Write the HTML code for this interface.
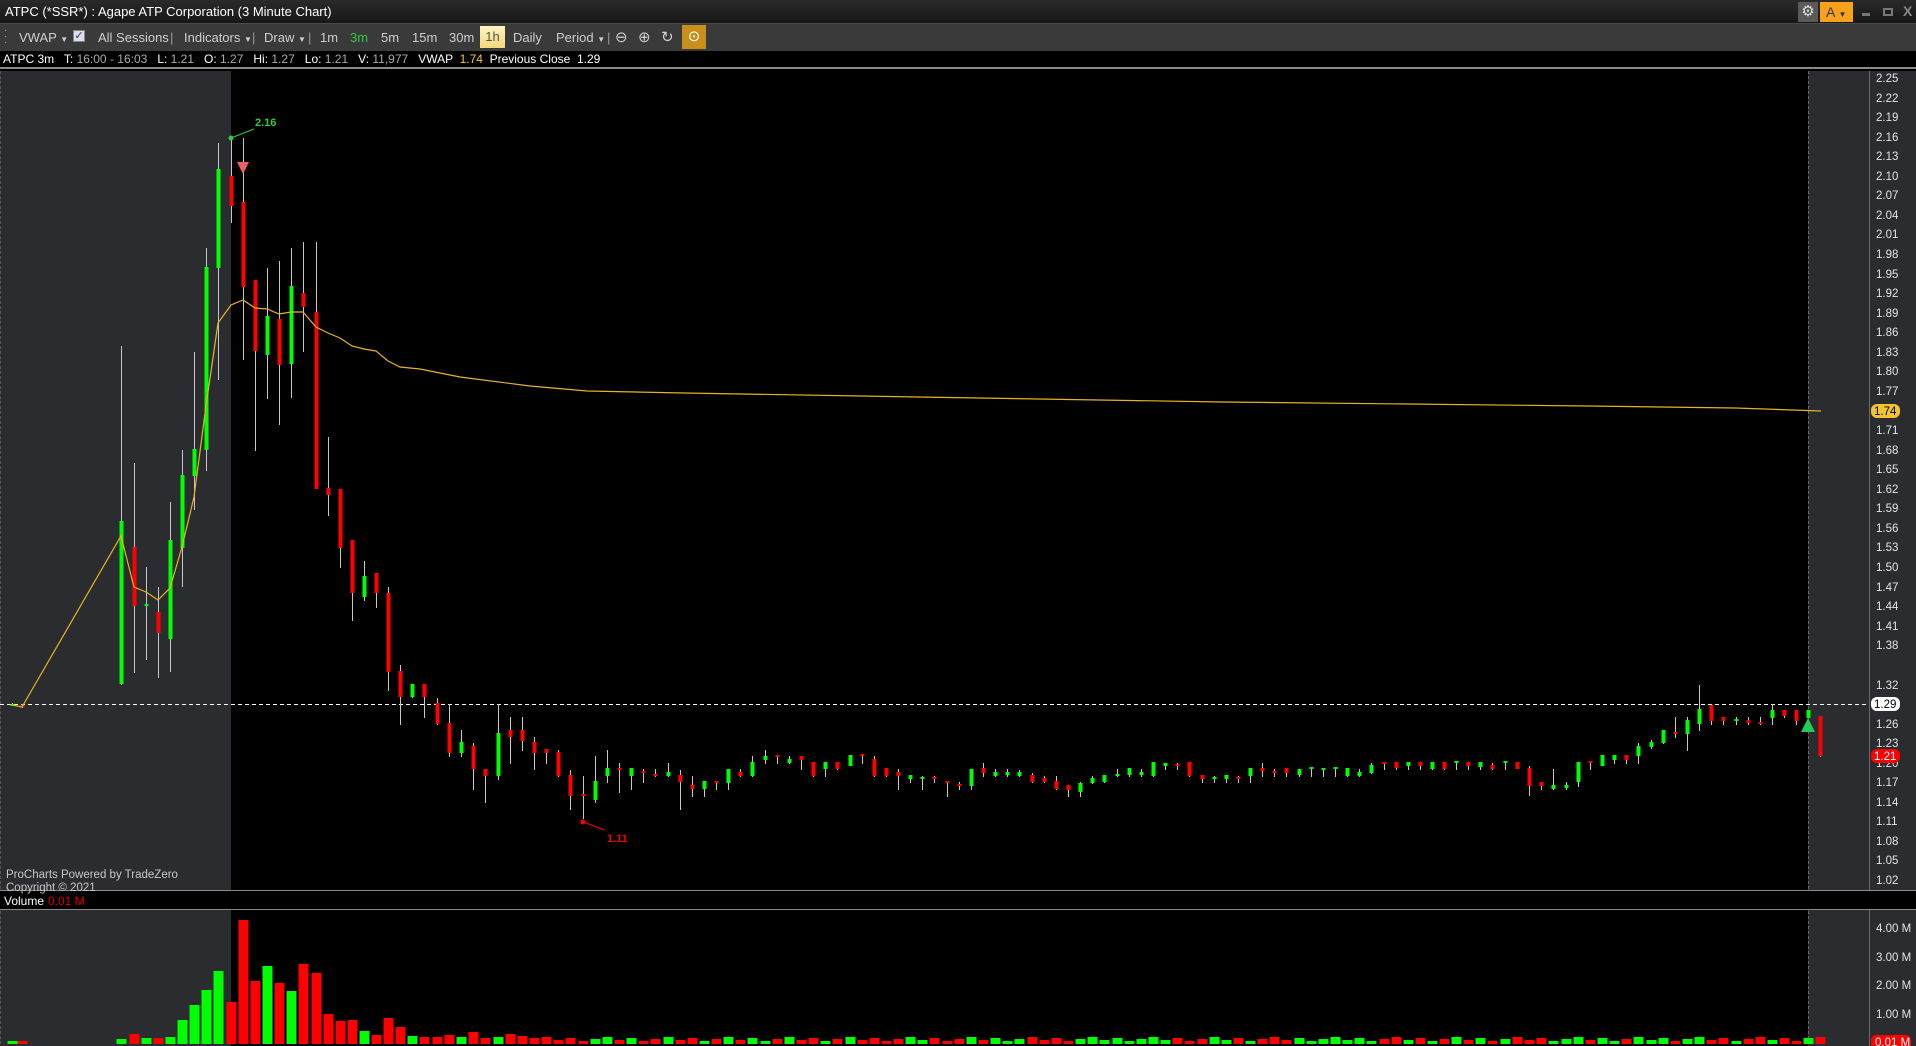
<!DOCTYPE html>
<html><head><meta charset="utf-8">
<style>
*{margin:0;padding:0;box-sizing:border-box}
body{width:1916px;height:1046px;background:#000;overflow:hidden;position:relative;font-family:"Liberation Sans",Arial,sans-serif}
#title{position:absolute;left:0;top:0;width:1916px;height:23px;background:linear-gradient(#2a2a2a,#171717);color:#fff;font-size:13px;line-height:23px;padding-left:5px;z-index:3}
#tb{position:absolute;left:0;top:23px;width:1916px;height:28px;background:#3a3a3a;border-top:1px solid #4a4a4a;z-index:3;color:#cfcfcf;font-size:13px}
#tb span{position:absolute;top:6px}
#info{position:absolute;left:0;top:51px;width:1916px;height:18px;background:#000;border-bottom:2px solid #8a8a8a;color:#fff;font-size:12px;line-height:17px;padding-left:3px;z-index:3;white-space:pre}
.g{color:#aaa}
svg{position:absolute;left:0;top:0}
</style></head><body>
<div id="title">ATPC (*SSR*) : Agape ATP Corporation (3 Minute Chart)
 <div style="position:absolute;left:1798px;top:2px;width:20px;height:20px;background:#5a5a5a;color:#ddd;font-size:15px;line-height:20px;text-align:center">⚙</div>
 <div style="position:absolute;left:1820px;top:2px;width:33px;height:20px;background:#f7a21a;color:#333;font-size:14px;line-height:20px;padding-left:6px">A <span style="font-size:8px">▼</span></div>
 <div style="position:absolute;left:1862px;top:13px;width:8px;height:3px;background:#777"></div>
 <div style="position:absolute;left:1883px;top:8px;width:10px;height:8px;border:2px solid #777"></div>
 <div style="position:absolute;left:1903px;top:0;color:#888;font-size:14px;font-weight:bold">X</div>
</div>
<div id="tb">
 <span style="left:4px;top:4px;color:#aaa;font-size:10px;line-height:6px">·<br>·<br>·</span>
 <span style="left:19px">VWAP <small style="font-size:8px">▼</small></span>
 <span style="left:73px;top:6px;width:12px;height:12px;background:#dde;border:1px solid #888;color:#246;font-size:11px;line-height:11px;text-align:center">✓</span>
 <span style="left:98px">All Sessions</span>
 <span style="left:170px;color:#999">|</span>
 <span style="left:184px">Indicators <small style="font-size:8px">▼</small></span>
 <span style="left:252px;color:#999">|</span>
 <span style="left:264px">Draw <small style="font-size:8px">▼</small></span>
 <span style="left:308px;color:#999">|</span>
 <span style="left:320px">1m</span>
 <span style="left:350px;color:#2ecc40">3m</span>
 <span style="left:381px">5m</span>
 <span style="left:412px">15m</span>
 <span style="left:449px">30m</span>
 <span style="left:480px;top:2px;width:25px;height:22px;background:linear-gradient(#fff6c0,#f5d77a);color:#555;text-align:center;line-height:22px">1h</span>
 <span style="left:513px">Daily</span>
 <span style="left:556px">Period <small style="font-size:8px">▼</small></span>
 <span style="left:607px;color:#999">|</span>
 <span style="left:615px;font-size:15px;top:4px">⊖</span>
 <span style="left:638px;font-size:15px;top:4px">⊕</span>
 <span style="left:661px;font-size:15px;top:4px">↻</span>
 <span style="left:682px;top:1px;width:24px;height:24px;background:#c8901a;color:#fff;text-align:center;line-height:24px;font-size:15px">⊙</span>
</div>
<div id="info">ATPC 3m   T: <span class="g">16:00 - 16:03</span>   L: <span class="g">1.21</span>   O: <span class="g">1.27</span>   Hi: <span class="g">1.27</span>   Lo: <span class="g">1.21</span>   V: <span class="g">11,977</span>   VWAP  <span style="color:#f4c430">1.74</span>  Previous Close  1.29</div>

<svg id="ch" width="1916" height="1046" xmlns="http://www.w3.org/2000/svg" font-family="Liberation Sans, Arial, sans-serif">
<rect x="0" y="69" width="1916" height="977" fill="#000"/>
<rect x="0" y="71" width="231" height="819" fill="#2b2c30"/>
<rect x="0" y="910" width="231" height="136" fill="#2b2c30"/>
<rect x="1808" y="71" width="61" height="819" fill="#2b2c30"/>
<rect x="1808" y="910" width="61" height="136" fill="#2b2c30"/>
<rect x="1869" y="71" width="47" height="975" fill="#2b2c30"/>
<line x1="1869.5" y1="71" x2="1869.5" y2="1046" stroke="#6a6a6a"/>
<line x1="1808.5" y1="71" x2="1808.5" y2="1046" stroke="#666" stroke-dasharray="3,2"/>
<line x1="0.5" y1="71" x2="0.5" y2="1046" stroke="#555" stroke-dasharray="3,2"/>
<rect x="0" y="891" width="1916" height="18" fill="#000"/>
<line x1="0" y1="890.5" x2="1916" y2="890.5" stroke="#8a8a8a"/>
<line x1="0" y1="909.5" x2="1916" y2="909.5" stroke="#8a8a8a"/>
<text x="4" y="905" font-size="12" fill="#fff">Volume</text>
<text x="48" y="905" font-size="12" fill="#e00000">0.01 M</text>
<text x="6" y="878" font-size="11.5" fill="#c8c8c8">ProCharts Powered by TradeZero</text>
<text x="6" y="891" font-size="11.5" fill="#c8c8c8">Copyright © 2021</text>
<line x1="0" y1="704.5" x2="1869" y2="704.5" stroke="#fff" stroke-dasharray="4,3"/>
<g id="cd"></g>
<polyline fill="none" stroke="#e6b422" stroke-width="1.2" points="12,705 22,707 121,536 134,587 146,592 158,600 170,588 182,547 194,497 206,406 218,323 231,305 243,300 255,308 267,309 279,314 291,312 303,312 316,327 328,333 340,338 352,346 364,349 376,351 388,361 400,367 420,369 460,377 530,386 587,391 684,393 978,398 1222,402 1589,406 1735,408 1821,411"/>
<g font-size="11.5" fill="#e4e4e4">
<text x="1876" y="82">2.25</text><text x="1876" y="102">2.22</text><text x="1876" y="121">2.19</text><text x="1876" y="141">2.16</text><text x="1876" y="160">2.13</text><text x="1876" y="180">2.10</text><text x="1876" y="199">2.07</text><text x="1876" y="219">2.04</text><text x="1876" y="238">2.01</text><text x="1876" y="258">1.98</text><text x="1876" y="278">1.95</text><text x="1876" y="297">1.92</text><text x="1876" y="317">1.89</text><text x="1876" y="336">1.86</text><text x="1876" y="356">1.83</text><text x="1876" y="375">1.80</text><text x="1876" y="395">1.77</text><text x="1876" y="434">1.71</text><text x="1876" y="454">1.68</text><text x="1876" y="473">1.65</text><text x="1876" y="493">1.62</text><text x="1876" y="512">1.59</text><text x="1876" y="532">1.56</text><text x="1876" y="551">1.53</text><text x="1876" y="571">1.50</text><text x="1876" y="591">1.47</text><text x="1876" y="610">1.44</text><text x="1876" y="630">1.41</text><text x="1876" y="649">1.38</text><text x="1876" y="689">1.32</text><text x="1876" y="728">1.26</text><text x="1876" y="747">1.23</text><text x="1876" y="767">1.20</text><text x="1876" y="786">1.17</text><text x="1876" y="806">1.14</text><text x="1876" y="825">1.11</text><text x="1876" y="845">1.08</text><text x="1876" y="864">1.05</text><text x="1876" y="884">1.02</text>
<text x="1876" y="932">4.00 M</text><text x="1876" y="961">3.00 M</text><text x="1876" y="989">2.00 M</text><text x="1876" y="1018">1.00 M</text>
</g>
<rect x="1871" y="404" width="29" height="14" rx="6" fill="#f4c430"/>
<text x="1874" y="415" font-size="11.5" fill="#000">1.74</text>
<rect x="1871" y="697" width="29" height="14" rx="6" fill="#fff"/>
<text x="1874" y="708" font-size="11.5" fill="#000">1.29</text>
<rect x="1871" y="749" width="29" height="14" rx="6" fill="#f00"/>
<text x="1874" y="760" font-size="11.5" fill="#fff">1.21</text>
<rect x="1871" y="1035" width="40" height="14" rx="5" fill="#f00"/>
<text x="1875" y="1046" font-size="11.5" fill="#fff">0.01 M</text>
<circle cx="231" cy="138" r="2.5" fill="#2ecc40"/>
<line x1="231" y1="138" x2="254" y2="129" stroke="#2ecc40"/>
<text x="255" y="126" font-size="11" font-weight="bold" fill="#2ecc40">2.16</text>
<polygon points="237,162 249,162 243,174" fill="#f06060"/>
<circle cx="583" cy="822" r="2.5" fill="#f00"/>
<line x1="583" y1="822" x2="605" y2="830" stroke="#f00"/>
<text x="607" y="842" font-size="11" font-weight="bold" fill="#f00">1.11</text>
</svg>
<svg width="1916" height="1046" style="pointer-events:none">
<polygon points="1808,718 1801,732 1815,732" fill="#22cc55"/>
</svg>
<script>
var C=[[12,703,706,704,706,1],[22,704,708,705,707,0],
[121,346,685,521,684,1],[134,463,673,547,606,0],[146,567,660,604,606,1],[158,587,678,612,633,0],[170,502,672,540,639,1],[182,450,587,475,548,1],[194,352,510,449,476,1],[206,248,471,267,450,1],[218,143,380,169,268,1],[231,138,223,176,206,0],[243,138,360,202,287,0],[255,280,451,280,351,0],[267,268,399,316,355,1],[279,261,425,319,365,0],[291,248,398,286,364,1],[303,242,352,293,307,0],[316,242,489,312,489,0],[328,437,516,488,495,0],[340,489,568,489,548,0],[352,540,621,540,593,0],[364,561,601,576,597,1],[376,573,608,573,593,0],[388,587,691,593,672,0],[400,665,725,671,697,0],[412,684,698,684,697,1],[424,684,718,684,697,0],
[437,698,725,703,724,0],[449,704,757,723,753,0],[461,730,757,742,753,1],[473,743,790,746,769,0],[485,769,803,769,776,0],[498,704,780,733,776,1],[510,717,764,730,737,0],[522,717,751,730,741,0],[534,737,770,742,753,0],[546,749,764,749,753,0],[558,750,777,752,776,0],[570,770,810,775,796,0],[583,776,819,794,796,0],[595,756,803,781,800,1],[607,750,783,768,776,1],[619,763,793,768,770,0],[631,768,790,768,776,1],[643,769,783,771,773,0],[655,769,777,774,776,0],[668,763,777,772,776,1],[680,770,810,775,782,0],[692,776,797,785,789,0],[704,781,797,781,789,1],[716,781,790,781,783,0],[728,769,790,769,783,1],[740,769,777,772,776,0],[752,756,777,762,776,1],[765,750,764,756,760,1],[777,755,764,755,757,0],[789,756,764,759,763,1],[801,756,770,756,760,0],[813,762,777,762,776,0],[825,762,777,762,769,1],[837,762,770,762,769,0],[850,755,766,755,766,1],[862,754,764,754,756,0],[874,756,777,759,776,0],[886,768,777,768,776,0],[898,769,790,772,776,0],[910,775,783,775,779,1],[922,776,790,777,779,1],[934,776,783,777,779,0],[947,781,797,781,783,0],[959,782,790,784,786,0],
[971,769,790,769,786,1],[983,763,777,768,773,0],[995,769,777,772,776,1],[1007,769,777,772,775,1],[1019,770,777,772,776,1],[1032,773,783,775,782,0],[1044,776,783,778,782,0],[1056,776,790,781,789,0],[1068,785,797,785,790,0],[1080,782,797,783,792,1],[1092,776,784,778,783,1],[1104,775,783,775,782,1],[1117,769,777,774,776,1],[1129,768,777,768,775,1],[1141,769,777,772,775,1],[1153,762,777,762,776,1],[1165,763,770,763,766,1],[1177,763,770,764,766,0],[1189,762,777,762,776,0],[1202,775,783,775,779,0],[1214,776,783,777,779,1],[1226,775,783,775,779,1],[1238,776,783,777,779,0],[1250,768,783,768,776,1],[1262,763,777,768,771,0],[1274,769,777,771,773,0],[1286,768,777,768,773,0],[1299,769,777,769,775,1],[1311,767,777,767,769,1],[1323,768,777,768,770,1],[1335,767,777,767,769,1],[1347,768,777,768,776,1],[1359,769,777,772,776,1],[1371,763,774,765,773,1],[1384,762,770,762,764,0],[1396,762,770,762,768,0],[1408,762,770,762,766,1],[1420,762,770,762,766,0],[1432,762,770,762,769,1],[1444,762,770,762,769,0],[1456,761,770,761,763,1],[1468,762,770,762,766,0],[1480,762,770,762,767,1],[1492,763,770,765,769,0],[1505,761,770,761,763,1],
[1517,762,769,762,769,0],[1529,766,796,768,786,0],[1541,782,790,782,786,0],[1553,769,790,785,789,1],[1566,782,790,785,788,1],[1578,762,787,762,782,1],[1590,761,770,761,763,0],[1602,755,766,755,766,1],[1614,755,764,755,760,1],[1626,755,764,755,760,0],[1638,743,764,746,756,1],[1651,740,749,742,747,1],[1663,730,744,730,743,1],[1675,717,738,732,734,0],[1687,717,751,720,734,1],[1699,685,731,709,724,1],[1711,705,725,705,721,0],[1723,717,725,717,721,0],[1736,717,725,719,721,1],[1748,717,725,720,723,0],[1760,717,725,722,724,0],[1772,704,725,710,718,1],[1784,710,718,710,716,0],[1796,710,725,710,721,0],[1808,710,718,710,718,1],[1820,716,757,716,756,0]];
var V={121:1039,134:1034,146:1038,158:1038,170:1037,182:1020,194:1005,206:990,218:971,231:1002,243:920,255:981,267:966,279:983,291:991,303:964,316:973,328:1014,340:1021,352:1020,364:1031,376:1035,388:1018,400:1027,412:1036,424:1037,437:1037,449:1035,461:1037,473:1032,485:1038,498:1037,510:1034,522:1036,534:1038};
var s='',ns='http://www.w3.org/2000/svg';
C.forEach(function(c,i){var x=c[0],col=c[5]?'#00ff00':'#ff0000';
s+='<line x1="'+(x+0.5)+'" y1="'+c[1]+'" x2="'+(x+0.5)+'" y2="'+c[2]+'" stroke="#c8c8c8"/>';
var h=Math.max(2,c[4]-c[3]);s+='<rect x="'+(x-1.5)+'" y="'+c[3]+'" width="4" height="'+h+'" fill="'+col+'"/>';
var vt=V[x]; if(x<100){vt=1041;} if(!vt){vt=1043-(2+((i*7)%5));} if(x==1808)vt=1038;
s+='<rect x="'+(x-4.5)+'" y="'+vt+'" width="10" height="'+(1044-vt)+'" fill="'+col+'"/>';});
document.getElementById('cd').innerHTML=s;
</script>
</body></html>
